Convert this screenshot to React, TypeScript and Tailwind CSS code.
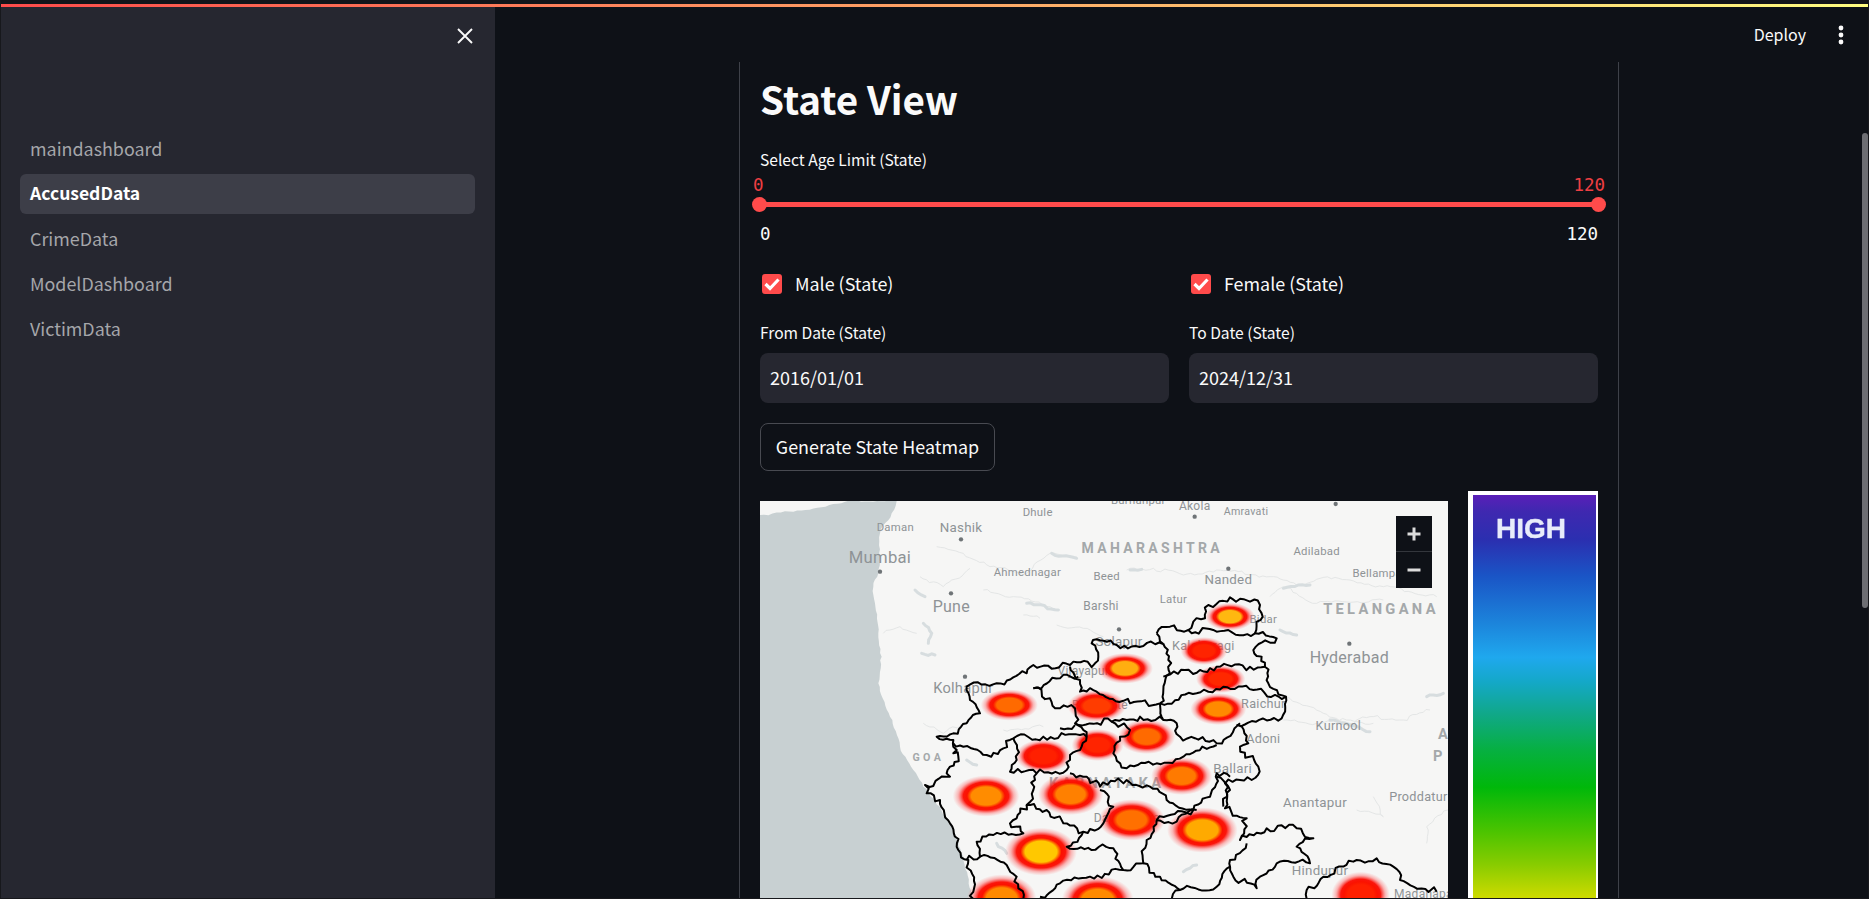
import React from "react";

const sans = "font-['Noto_Sans_CJK_SC','Noto_Sans',sans-serif]";
const mono = "font-['DejaVu_Sans_Mono',monospace]";

type P = [number, number];

function jag(points: P[], seed: number, amp = 11, step = 11): string {
  let out = `M${points[0][0]},${points[0][1]}`;
  let k = seed * 13.37;
  for (let i = 1; i < points.length; i++) {
    const [x0, y0] = points[i - 1];
    const [x1, y1] = points[i];
    const len = Math.hypot(x1 - x0, y1 - y0);
    const n = Math.max(1, Math.round(len / step));
    const nx = -(y1 - y0) / (len || 1);
    const ny = (x1 - x0) / (len || 1);
    for (let j = 1; j <= n; j++) {
      k += 1;
      const t = j / n;
      const r = j === n ? 0 : (Math.sin(k * 12.9898) * 43758.5453) % 1;
      const o = r * amp;
      out += ` L${(x0 + (x1 - x0) * t + nx * o).toFixed(1)},${(y0 + (y1 - y0) * t + ny * o).toFixed(1)}`;
    }
  }
  return out;
}

const coast: P[] = [[30,75],[130,65],[310,33],[440,33],[425,70],[390,130],[385,250],[370,290],[375,340],[385,430],[395,500],[385,580],[420,680],[450,770],[490,840],[520,890],[570,950],[610,1020],[640,1100],[665,1227]];

const borders: P[][] = [
  [[1220,430],[1260,410],[1315,420],[1400,425],[1515,430],[1580,445],[1510,480],[1545,530],[1555,580],[1608,620],[1595,685],[1462,705],[1495,760],[1470,770],[1525,830],[1505,870],[1425,880],[1425,955],[1490,985],[1470,1050],[1550,1015],[1640,1015],[1690,1045],[1640,1070],[1680,1120],[1580,1120],[1530,1160],[1520,1195],[1450,1160],[1440,1110],[1490,1060]],
  [[1315,420],[1330,395],[1365,385],[1375,345],[1440,322],[1500,335],[1530,345],[1538,380],[1515,430]],
  [[1220,430],[1240,462],[1180,468],[1100,465],[1040,448],[1025,460],[1045,500],[1035,520],[960,525],[850,525],[830,550],[740,580],[650,590],[660,630],[690,670],[650,700],[610,730],[560,740],[610,750],[610,790],[625,800],[600,830],[600,860],[525,885],[530,910],[570,930],[600,1000],[625,1080],[655,1110],[670,1227]],
  [[1240,462],[1255,510],[1260,550],[1240,600],[1230,640],[1140,640],[1040,605],[990,605],[990,570],[960,530]],
  [[850,595],[930,565],[985,560]],
  [[850,595],[900,625],[930,655],[975,655],[975,700],[1085,695],[1130,690],[1170,680],[1240,690],[1230,640]],
  [[1240,560],[1350,540],[1400,530],[1500,530],[1545,530]],
  [[1230,640],[1340,610],[1420,590],[1510,600],[1608,620]],
  [[1240,690],[1280,700],[1290,740],[1400,760],[1470,700]],
  [[610,760],[710,795],[760,775],[790,745],[880,740],[990,735],[1010,740]],
  [[930,715],[975,705]],
  [[790,745],[800,810],[780,845],[860,850],[950,840],[960,810],[990,780],[1010,740],[975,700]],
  [[1085,695],[1140,720],[1110,740],[1090,790],[1130,835],[1220,820],[1300,800],[1400,765]],
  [[960,850],[1010,860],[1050,890],[1130,870],[1200,890],[1250,930],[1330,960],[1380,920],[1400,850],[1440,860]],
  [[1400,860],[1440,900],[1420,950]],
  [[860,850],[850,900],[830,945],[890,960],[940,1000],[1000,1025],[1060,1000],[1090,950],[1050,900]],
  [[830,945],[800,985],[780,1000],[820,1030],[730,1035],[680,1055],[690,1100],[650,1110]],
  [[1000,1025],[950,1070],[1090,1075],[1120,1140],[1180,1120],[1190,1050],[1220,990],[1330,960]],
  [[1220,990],[1280,995],[1340,960]],
  [[1180,1120],[1230,1160],[1290,1200],[1400,1190],[1440,1130]],
  [[690,1100],[770,1125],[800,1160],[820,1227]],
  [[870,1220],[930,1180],[1020,1160],[1120,1140]],
  [[1670,1227],[1670,1200],[1720,1160],[1820,1110],[1880,1105],[1930,1130],[1950,1170],[2060,1205]],
  [[1250,1227],[1290,1200]],
];

const blobs: [number, number, number, number, string][] = [
  [1440,380,74,42,"#ffb810"],[1362,483,70,42,"#ff2400"],[1412,567,74,42,"#ff2800"],[1405,657,84,48,"#ff8a00"],
  [1125,535,84,46,"#ffae10"],[778,645,86,47,"#ff6a00"],[1040,648,88,48,"#ff3c00"],[1190,740,86,52,"#ff6a00"],
  [1043,765,78,48,"#ff2400"],[880,798,84,50,"#ff2000"],[1295,858,92,57,"#ff7a00"],[708,918,100,62,"#ff8c00"],
  [962,913,98,62,"#ff8000"],[1145,990,100,62,"#ff7000"],[1357,1020,106,68,"#ffaa00"],[873,1085,108,72,"#ffc800"],
  [755,1225,104,72,"#ff8a00"],[1043,1230,108,72,"#ff8a00"],[1832,1215,88,70,"#ff2000"],
];

const labels: [number, number, number, string, boolean?][] = [
  [436,122,34,"Daman"],[633,125,40,"Nashik"],[863,78,34,"Dhule"],[1165,42,34,"Burhanpur"],[1334,60,36,"Akola"],
  [1488,74,32,"Amravati"],[390,218,50,"Mumbai"],[832,257,34,"Ahmednagar"],[1070,270,34,"Beed"],
  [1207,190,42,"MAHARASHTRA",true],[1435,282,40,"Nanded"],[1270,338,34,"Latur"],[604,365,48,"Pune"],
  [1053,360,36,"Barshi"],[1107,468,40,"Solapur"],[1360,480,38,"Kalaburagi"],[1010,555,36,"Vijayapura"],
  [640,608,44,"Kolhapur"],[1050,657,36,"Bagalkote"],[535,812,32,"GOA",true],[1540,655,38,"Raichur"],
  [1448,850,40,"Ballari"],[1070,895,44,"KARNATAKA",true],[1130,995,36,"Davanagere"],[1700,195,34,"Adilabad"],
  [1900,260,34,"Bellampalle"],[1893,372,44,"TELANGANA",true],[1798,518,48,"Hyderabad"],[1765,720,38,"Kurnool"],
  [1540,760,38,"Adoni"],[1695,950,40,"Anantapur"],[2005,932,38,"Proddatur"],[2084,748,44,"A",true],[2068,812,44,"P",true],
  [1540,400,34,"Bidar"],[1710,1155,40,"Hindupur"],[2040,1225,36,"Madanapalle"],
];

const dots: P[] = [[633,148],[390,245],[603,310],[1107,418],[645,560],[1435,236],[1334,80],[1798,461],[1757,42]];

const rivers: P[][] = [
  [[560,170],[640,190],[720,230],[830,250],[900,190],[980,200]],
  [[510,260],[580,290],[660,235]],
  [[700,300],[790,320],[900,350],[930,360]],
  [[820,375],[870,385]],
  [[920,405],[1000,415],[1060,440]],
  [[1130,240],[1210,235],[1300,255],[1400,240],[1560,260],[1640,285],[1710,265],[1800,270],[1900,290],[2060,320]],
  [[1560,320],[1600,290],[1700,340],[1900,330]],
  [[1610,620],[1720,670],[1800,700],[1860,680],[1960,690],[2040,660]],
  [[1600,690],[1700,700],[1790,690],[1870,700]],
  [[1820,960],[1900,980],[1870,920]],
  [[2094,960],[2030,1010],[2030,1060]],
  [[500,430],[450,410],[400,430]],
  [[520,700],[580,730],[640,700]],
  [[760,720],[880,710]],
];

const waters: P[][] = [
  [[520,400],[545,430],[535,460]],[[515,490],[555,495]],[[495,300],[525,320]],[[830,340],[925,360]],[[905,190],[980,205]],
  [[1140,240],[1175,238]],[[1600,295],[1680,285]],[[1590,420],[1640,435]],[[2030,620],[2080,610]],[[1740,690],[1860,725]],
  [[650,810],[680,825]],[[1300,1145],[1340,1125]],[[740,1060],[770,1090]],
];

function HeatMap() {
  return (
    <svg viewBox="30 33 2064 1194" className="block h-[398px] w-[688px]" xmlns="http://www.w3.org/2000/svg">
      <defs>
        {blobs.map((b, i) => (
          <radialGradient key={i} id={`heat${i}`}>
            <stop offset="0" stopColor={b[4]} />
            <stop offset="0.44" stopColor={b[4]} />
            <stop offset="0.57" stopColor="#fb1200" />
            <stop offset="0.68" stopColor="#fb0a00" stopOpacity="0.95" />
            <stop offset="0.84" stopColor="#ff3a3a" stopOpacity="0.35" />
            <stop offset="1" stopColor="#ff6060" stopOpacity="0" />
          </radialGradient>
        ))}
      </defs>
      <rect x="30" y="33" width="2064" height="1194" fill="#f6f6f5" />
      <path d={`${jag(coast, 77, 4, 12)} L30,1227 Z`} fill="#c8d0d2" />
      {rivers.map((r, i) => (
        <path key={i} d={jag(r, i + 40, 6)} fill="none" stroke="#e4e6e6" strokeWidth="3" />
      ))}
      {waters.map((w, i) => (
        <path key={i} d={jag(w, i + 90, 5)} fill="none" stroke="#d7dddf" strokeWidth="9" strokeLinecap="round" />
      ))}
      {dots.map((d, i) => (
        <circle key={i} cx={d[0]} cy={d[1]} r="6.5" fill="#6f7477" />
      ))}
      {labels.map(([x, y, s, t, b], i) => (
        <text
          key={i}
          x={x}
          y={y}
          fontSize={s}
          textAnchor="middle"
          fill={b ? "#a4a8aa" : "#8e9396"}
          fontWeight={b ? 700 : 400}
          letterSpacing={b ? 10 : 0.8}
          fontFamily="Roboto, sans-serif"
        >
          {t}
        </text>
      ))}
      {blobs.map((b, i) => (
        <ellipse key={i} cx={b[0]} cy={b[1]} rx={b[2]} ry={b[3]} fill={`url(#heat${i})`} />
      ))}
      {borders.map((b, i) => (
        <path key={i} d={jag(b, i + 1)} fill="none" stroke="#000" strokeWidth="6" strokeLinejoin="round" />
      ))}
    </svg>
  );
}

function Check() {
  return (
    <span className="flex h-5 w-5 shrink-0 items-center justify-center rounded-[3px] bg-[#ff4b4b]">
      <svg viewBox="0 0 20 20" className="h-5 w-5" fill="none">
        <path d="M3.5 10 L8 14.5 L16.5 5.5" stroke="#fff" strokeWidth="3.2" />
      </svg>
    </span>
  );
}

const nav = ["maindashboard", "AccusedData", "CrimeData", "ModelDashboard", "VictimData"];

export default function App() {
  return (
    <div className={`relative flex h-[899px] w-[1869px] flex-col overflow-hidden bg-[#0e1117] text-[#fafafa] ${sans}`}>
      <div className="h-1 shrink-0 bg-[#14151a]" />
      <div className="h-[3px] shrink-0 bg-[linear-gradient(90deg,#ff4b4b,#fffd80)]" />
      <div className="flex min-h-0 flex-1">
        <aside className="ml-px flex w-[494px] shrink-0 flex-col bg-[#262730] pr-5 pl-[19px]">
          <div className="flex h-[58px] shrink-0 items-center justify-end">
            <svg viewBox="0 0 20 20" className="h-5 w-5" fill="none" stroke="#fafafa" strokeWidth="1.9">
              <path d="M3 3 L17 17 M17 3 L3 17" />
            </svg>
          </div>
          <nav className="mt-16 flex flex-col gap-[5px]">
            {nav.map((n) => (
              <div
                key={n}
                className={
                  n === "AccusedData"
                    ? "flex h-10 items-center rounded-md bg-[#3d3e48] pb-[2px] pl-[10px] text-[17.5px] font-semibold text-white"
                    : "flex h-10 items-center pb-[2px] pl-[10px] text-[17.9px] text-[#a5a6aa]"
                }
              >
                {n}
              </div>
            ))}
          </nav>
        </aside>

        <main className="relative min-w-0 flex-1">
          <header className="flex h-[55px] items-center justify-end">
            <span className="mr-[32px] pb-[2px] text-[16px] leading-5">Deploy</span>
            <svg viewBox="0 0 6 20" className="mr-[25px] h-5 w-[6px]" fill="#fafafa">
              <circle cx="3" cy="3" r="2.4" />
              <circle cx="3" cy="10" r="2.4" />
              <circle cx="3" cy="17" r="2.4" />
            </svg>
          </header>

          <div className="ml-[244px] flex w-[880px] flex-col border-x border-[#3e4149] px-5">
            <h1 className="flex h-[76px] items-center pb-1 text-[38.6px] leading-none font-bold">State View</h1>
            <label className="mt-3 h-5 text-[15.6px] leading-[18px]">Select Age Limit (State)</label>

            <div className={`-mx-[7px] mt-[5px] flex h-5 justify-between text-[17.5px] leading-5 text-[#ee3f43] ${mono}`}>
              <span>0</span>
              <span>120</span>
            </div>
            <div className="relative mt-[7px] h-[5px] rounded-full bg-[#ff4b4b]">
              <span className="absolute -top-[5px] -left-2 h-[15px] w-[15px] rounded-full bg-[#ff4b4b]" />
              <span className="absolute -top-[5px] -right-2 h-[15px] w-[15px] rounded-full bg-[#ff4b4b]" />
            </div>
            <div className={`mt-[17px] flex h-5 justify-between text-[17.5px] leading-5 text-[#fafafa] ${mono}`}>
              <span>0</span>
              <span>120</span>
            </div>

            <div className="mt-[30px] grid grid-cols-2 gap-5">
              {["Male (State)", "Female (State)"].map((t) => (
                <div key={t} className="ml-[2px] flex h-5 items-center gap-[13px] text-[17.9px] leading-5">
                  <Check />
                  <span className="pb-[2px]">{t}</span>
                </div>
              ))}
            </div>

            <div className="mt-[29px] grid grid-cols-2 gap-5">
              {[
                ["From Date (State)", "2016/01/01"],
                ["To Date (State)", "2024/12/31"],
              ].map(([l, v]) => (
                <div key={l} className="flex flex-col">
                  <label className="h-5 text-[15.6px] leading-[18px]">{l}</label>
                  <div className="mt-[10px] flex h-[50px] items-center rounded-lg bg-[#262730] pb-[2px] pl-[10px] text-[18px]">{v}</div>
                </div>
              ))}
            </div>

            <button className="mt-5 flex h-12 w-[235px] items-center justify-center rounded-lg border border-[#484a51] pb-[2px] text-[17.9px]">
              Generate State Heatmap
            </button>

            <div className="mt-5 flex items-start justify-between">
              <div className="relative mt-[10px]">
                <HeatMap />
                <div className="absolute top-[15px] right-4 flex h-[72px] w-9 flex-col bg-[#0e1117]">
                  <div className="flex h-9 items-center justify-center border-b border-[#33363c]">
                    <svg viewBox="0 0 16 16" className="h-4 w-4" stroke="#dcdcdc" strokeWidth="3">
                      <path d="M1.5 8 H14.5 M8 1.5 V14.5" />
                    </svg>
                  </div>
                  <div className="flex h-9 items-center justify-center">
                    <svg viewBox="0 0 16 16" className="h-4 w-4" stroke="#dcdcdc" strokeWidth="3">
                      <path d="M1.5 8 H14.5" />
                    </svg>
                  </div>
                </div>
              </div>
              <div className="h-[410px] w-[130px] border-t-4 border-r-2 border-l-[5px] border-white bg-[linear-gradient(180deg,#5a1fb8_0%,#3f28b0_4%,#2b2fb0_11%,#1a55c6_20%,#1c86dc_32%,#1fa8ee_40%,#14a8c8_46%,#10a888_54%,#06b040_63%,#00b80a_72%,#4cc400_83%,#88cc00_91%,#d4dc00_100%)]">
                <div className="mt-4 mr-[7px] text-center font-['Liberation_Sans',sans-serif] text-[28px] leading-9 font-bold text-[#e8ecfa] blur-[0.7px] [-webkit-text-stroke:0.4px_#e8ecfa]">
                  HIGH
                </div>
              </div>
            </div>
          </div>

          <div className="absolute top-[126px] right-[1px] h-[475px] w-[6px] rounded-full bg-[#6d6e73]" />
        </main>
      </div>
      <div className="pointer-events-none absolute inset-0 border-r border-b border-l border-[#17181c]" />
    </div>
  );
}
